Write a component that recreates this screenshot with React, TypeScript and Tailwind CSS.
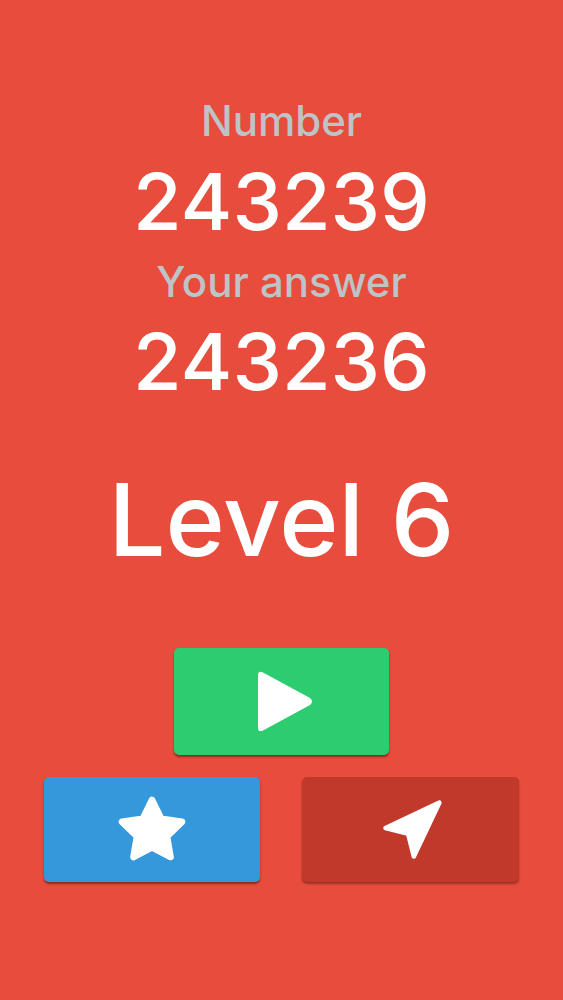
import React from 'react';

const PlayIcon: React.FC<{ className?: string }> = ({ className }) => (
  <svg className={className} viewBox="0 0 57 65" fill="white">
    <path d="M6 3.5 L53 29 Q57 32.5 53 36 L6 61.5 Q1 64 1 58.5 L1 6.5 Q1 1 6 3.5 Z" />
  </svg>
);

const StarIcon: React.FC<{ className?: string }> = ({ className }) => (
  <svg className={className} viewBox="0 0 24 24" fill="white" stroke="white" strokeWidth="2.2" strokeLinejoin="round">
    <polygon points="12 2 15.09 8.26 22 9.27 17 14.14 18.18 21.02 12 17.77 5.82 21.02 7 14.14 2 9.27 8.91 8.26 12 2" />
  </svg>
);

const NavIcon: React.FC<{ className?: string }> = ({ className }) => (
  <svg className={className} viewBox="0 0 24 24" fill="white" stroke="white" strokeWidth="1.6" strokeLinejoin="round">
    <polygon points="3 11 22 2 13 21 11 13 3 11" />
  </svg>
);

const App: React.FC = () => {
  return (
    <div
      className="w-full min-h-[1000px] bg-[#e74c3c] flex flex-col items-center font-medium"
      style={{ fontFamily: 'Inter, "Liberation Sans", sans-serif' }}
    >
      <div className="mt-[100px] text-[42px] leading-none text-[#bdc3c7]">Number</div>
      <div className="mt-[20px] text-[79px] leading-none text-white">243239</div>
      <div className="mt-[20px] text-[42px] leading-none text-[#bdc3c7]">Your answer</div>
      <div className="mt-[19px] text-[79px] leading-none text-white">243236</div>
      <div className="mt-[68px] text-[101px] leading-none text-white">Level 6</div>

      <button className="mt-[78px] w-[215px] h-[107px] rounded-[5px] bg-[#2ecc71] shadow-[0_2px_2px_rgba(60,20,10,0.55)] flex items-center justify-center">
        <PlayIcon className="w-[57px] h-[65px] ml-[8px]" />
      </button>

      <div className="mt-[22px] w-full px-[44px] flex justify-between">
        <button className="w-[216px] h-[105px] rounded-[5px] bg-[#3498db] shadow-[0_2px_2px_rgba(60,20,10,0.55)] flex items-center justify-center">
          <StarIcon className="w-[72px] h-[72px]" />
        </button>
        <button className="w-[217px] h-[105px] rounded-[5px] bg-[#c0392b] shadow-[0_2px_2px_rgba(60,20,10,0.45)] flex items-center justify-center">
          <NavIcon className="w-[68px] h-[68px] mt-[2px]" />
        </button>
      </div>
    </div>
  );
};

export default App;
